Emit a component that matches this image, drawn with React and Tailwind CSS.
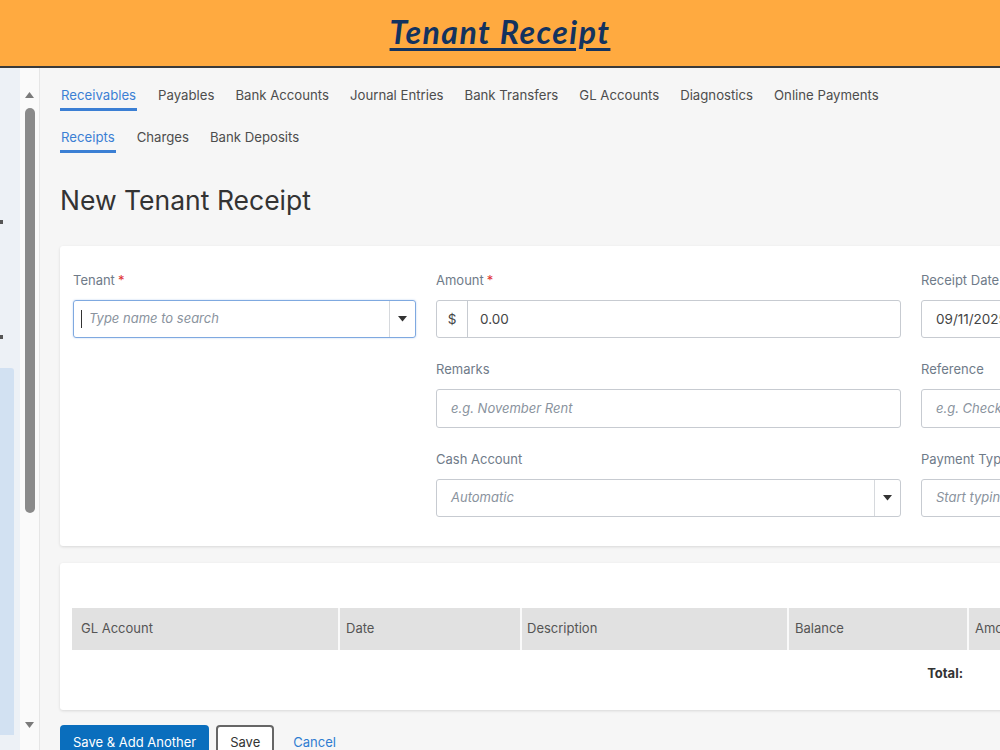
import React from 'react';

const mainTabs = ['Receivables', 'Payables', 'Bank Accounts', 'Journal Entries', 'Bank Transfers', 'GL Accounts', 'Diagnostics', 'Online Payments'];
const subTabs = ['Receipts', 'Charges', 'Bank Deposits'];

const Caret = () => (
  <svg width="9" height="6" viewBox="0 0 9 6" className="fill-[#333]">
    <path d="M0 0h9L4.5 5.5z" />
  </svg>
);

const Label = ({ children, required }) => (
  <div className="text-[13px] leading-[18px] text-[#6f7b89] mb-[11px]">
    {children}
    {required && <span className="text-[#e03131] ml-[3px]">*</span>}
  </div>
);

const Tabs = ({ items }) => (
  <div className="flex gap-[21px] text-[13.2px] leading-5">
    {items.map((t, i) => (
      <div
        key={t}
        className={
          i === 0
            ? 'text-[#3b7fd4] border-b-[3px] border-[#3b7fd4] pb-[3px] px-[1px]'
            : 'text-[#4d4d4d] pb-[6px]'
        }
      >
        {t}
      </div>
    ))}
  </div>
);

export default function App() {
  return (
    <div className="h-[750px] overflow-hidden flex flex-col bg-[#f6f6f6] font-['Inter',sans-serif]">
      {/* Banner */}
      <div className="h-[68px] shrink-0 bg-[#ffaa40] border-b-2 border-[#3a3a3a] flex items-center justify-center">
        <h1 className="font-['Lato',sans-serif] italic font-bold text-[32px] tracking-[1.5px] text-[#13335f] underline decoration-[3px] underline-offset-[4px] -mt-[2px]">
          Tenant Receipt
        </h1>
      </div>

      <div className="flex flex-1 min-h-0">
        {/* Left nav strip */}
        <div className="w-5 shrink-0 bg-[#edf1f6] flex flex-col">
          <div className="h-[152px]" />
          <div className="w-[3px] h-[4px] bg-[#555]" />
          <div className="h-[111px]" />
          <div className="w-[3px] h-[4px] bg-[#555]" />
          <div className="h-[29px]" />
          <div className="flex-1 mr-[6px] mb-[15px] bg-[#d2e1f2] rounded-tr-[3px]" />
        </div>

        {/* Scrollbar */}
        <div className="w-5 shrink-0 bg-[#fafafa] border-r border-[#e6e6e6] flex flex-col items-center pt-[24px] pb-[22px]">
          <svg width="9" height="6" viewBox="0 0 9 6" className="fill-[#7a7a7a]">
            <path d="M4.5 0L9 6H0z" />
          </svg>
          <div className="w-[10px] h-[405px] mt-[10px] rounded-full bg-[#8a8a8a]" />
          <div className="flex-1" />
          <svg width="9" height="6" viewBox="0 0 9 6" className="fill-[#7a7a7a]">
            <path d="M0 0h9L4.5 6z" />
          </svg>
        </div>

        {/* Main */}
        <div className="flex-1 min-w-0 overflow-hidden pl-5 pt-[17px]">
          <Tabs items={mainTabs} />
          <div className="mt-4">
            <Tabs items={subTabs} />
          </div>

          <h2 className="mt-[29px] text-[26.5px] leading-9 text-[#333]">New Tenant Receipt</h2>

          {/* Form card */}
          <div className="mt-[28px] w-[1000px] bg-white rounded-[3px] shadow-[0_1px_3px_rgba(0,0,0,0.12)] pl-[13px] pt-[25px] pb-[29px]">
            <div className="grid grid-cols-[343px_465px_120px] gap-x-5">
              <div>
                <Label required>Tenant</Label>
                <div className="h-[38px] border border-[#7fa9e0] rounded-[3px] flex items-center shadow-[0_0_2px_rgba(80,140,220,0.4)]">
                  <div className="w-px h-[18px] bg-[#333] ml-[7px]" />
                  <span className="ml-[7px] text-[13px] italic text-[#8a939e]">Type name to search</span>
                  <div className="ml-auto w-[26px] h-full border-l border-[#d6d9dd] flex items-center justify-center">
                    <Caret />
                  </div>
                </div>
              </div>

              <div className="flex flex-col">
                <Label required>Amount</Label>
                <div className="h-[38px] border border-[#c7cbd1] rounded-[3px] flex items-center text-[13.5px] text-[#444]">
                  <div className="w-[31px] h-full border-r border-[#c7cbd1] flex items-center justify-center">$</div>
                  <span className="ml-3">0.00</span>
                </div>

                <div className="mt-[22px]">
                  <Label>Remarks</Label>
                  <div className="h-[39px] border border-[#c7cbd1] rounded-[3px] flex items-center pl-[14px] text-[13px] italic text-[#8a939e]">
                    e.g. November Rent
                  </div>
                </div>

                <div className="mt-[22px]">
                  <Label>Cash Account</Label>
                  <div className="h-[38px] border border-[#c7cbd1] rounded-[3px] flex items-center text-[13px] italic text-[#8a939e]">
                    <span className="pl-[14px]">Automatic</span>
                    <div className="ml-auto w-[26px] h-full border-l border-[#d6d9dd] flex items-center justify-center">
                      <Caret />
                    </div>
                  </div>
                </div>
              </div>

              <div className="flex flex-col whitespace-nowrap">
                <Label>Receipt Date</Label>
                <div className="h-[38px] border border-[#c7cbd1] rounded-[3px] flex items-center pl-[14px] text-[13.5px] text-[#444]">
                  09/11/2025
                </div>

                <div className="mt-[22px]">
                  <Label>Reference</Label>
                  <div className="h-[39px] border border-[#c7cbd1] rounded-[3px] flex items-center pl-[14px] text-[13px] italic text-[#8a939e]">
                    e.g. Check #
                  </div>
                </div>

                <div className="mt-[22px]">
                  <Label>Payment Type</Label>
                  <div className="h-[38px] border border-[#c7cbd1] rounded-[3px] flex items-center pl-[14px] text-[13px] italic text-[#8a939e]">
                    Start typing
                  </div>
                </div>
              </div>
            </div>
          </div>

          {/* Charges table card */}
          <div className="mt-[17px] w-[1000px] h-[147px] bg-white rounded-[3px] shadow-[0_1px_3px_rgba(0,0,0,0.12)] pl-3 pt-[45px]">
            <div className="grid grid-cols-[266px_180px_265px_178px_120px] gap-x-[2px] h-[42px] bg-[#fafafa] text-[13px] text-[#555]">
              <div className="bg-[#e1e1e1] flex items-center pl-[9px]">GL Account</div>
              <div className="bg-[#e1e1e1] flex items-center pl-[6px]">Date</div>
              <div className="bg-[#e1e1e1] flex items-center pl-[5px]">Description</div>
              <div className="bg-[#e1e1e1] flex items-center pl-[6px]">Balance</div>
              <div className="bg-[#e1e1e1] flex items-center pl-[6px]">Amount</div>
            </div>
            <div className="grid grid-cols-[266px_180px_265px_178px_120px] gap-x-[2px] mt-[14px] text-[13px]">
              <div />
              <div />
              <div />
              <div className="text-right font-bold text-[#333] pr-[4px]">Total:</div>
            </div>
          </div>

          {/* Actions */}
          <div className="mt-[15px] flex items-start gap-[7px] text-[13px]">
            <button className="h-[36px] px-[13px] bg-[#0a6ebd] text-white rounded-[4px]">Save &amp; Add Another</button>
            <button className="h-[36px] px-[12px] bg-white text-[#333] border-2 border-[#666] rounded-[4px]">Save</button>
            <button className="h-[36px] px-[12px] text-[#2f7dd1]">Cancel</button>
          </div>
        </div>
      </div>
    </div>
  );
}
